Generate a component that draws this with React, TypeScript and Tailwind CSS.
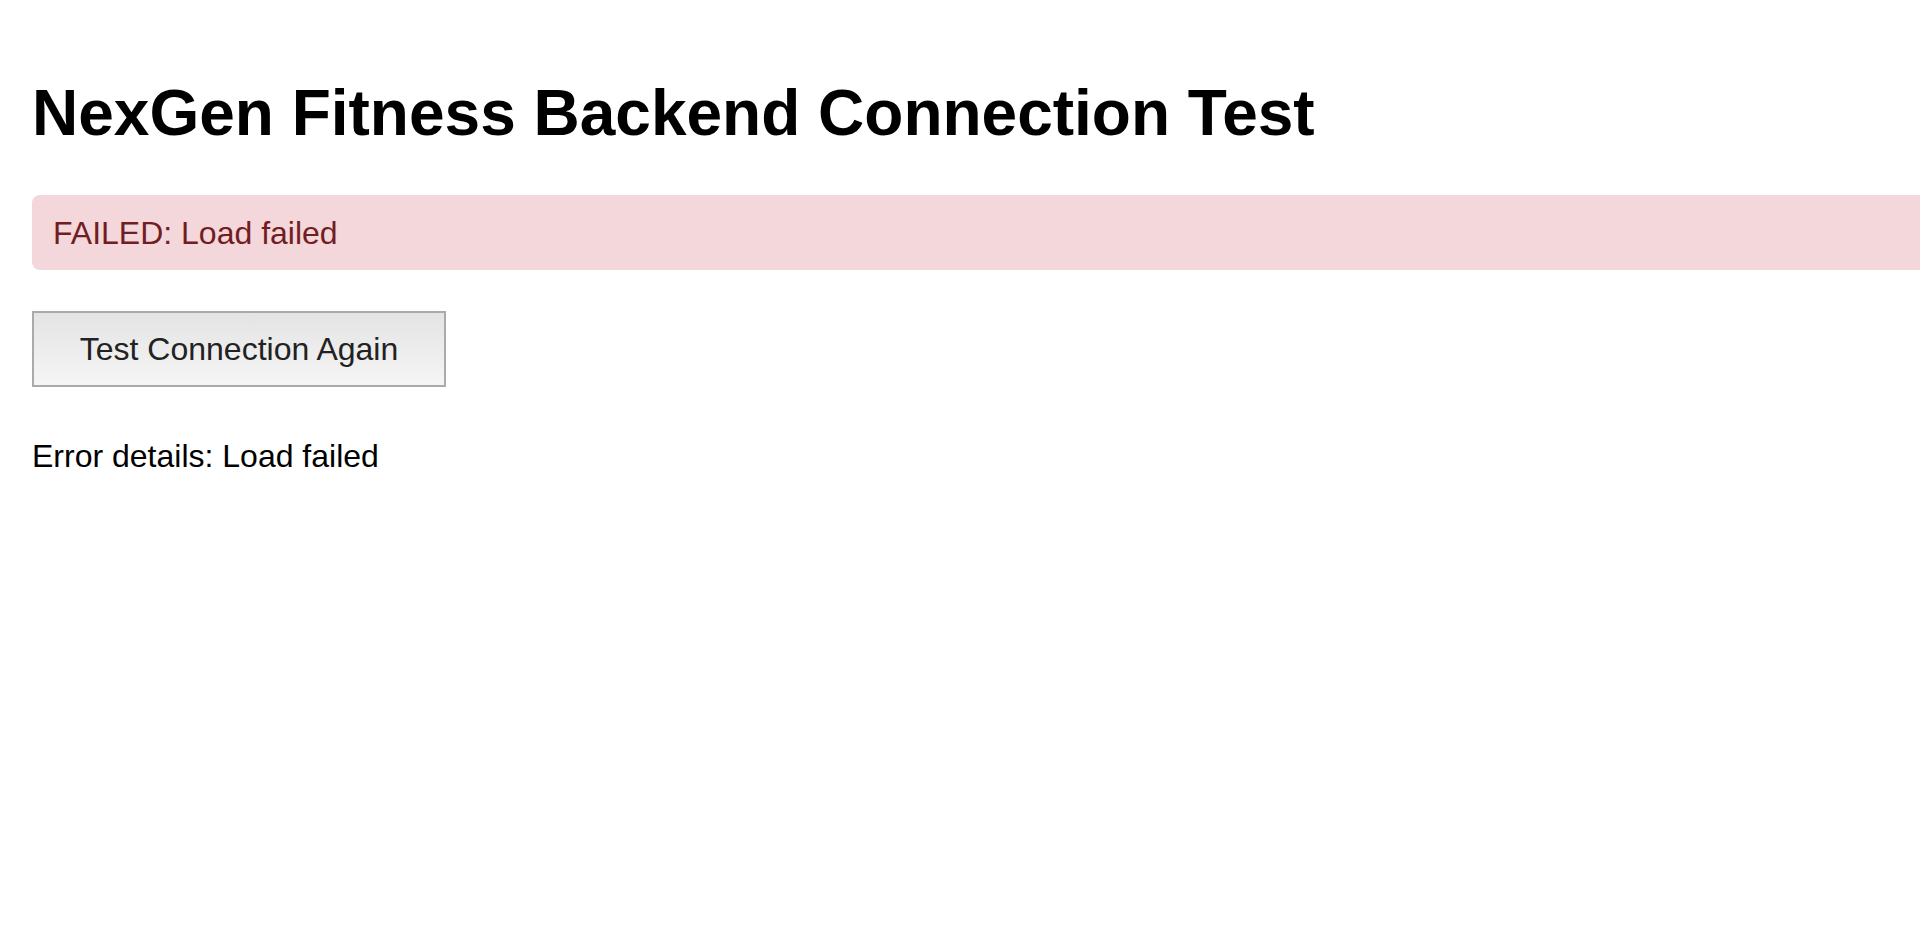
import { useState } from 'react';

export default function App() {
  const [tries, setTries] = useState(0);
  const message = 'Load failed';

  return (
    <div className="min-h-screen overflow-x-hidden bg-white px-8 pt-[76px] font-['Liberation_Sans',Arial,sans-serif] text-black">
      <h1 className="text-[64px] leading-[74px] font-bold">NexGen Fitness Backend Connection Test</h1>

      {/* status bar runs off the right edge, like the original */}
      <div className="mt-[45px] flex h-[75px] w-[calc(100%+48px)] items-center rounded-[8px] bg-[#f3d7da] px-[21px] text-[32px] text-[#721c24]">
        FAILED: {message}
      </div>

      <button
        onClick={() => setTries(tries + 1)}
        className="mt-[41px] h-[76px] w-[414px] border-2 border-[#aaaaaa] bg-gradient-to-b from-[#e4e4e4] to-[#f5f5f5] text-[32px] text-[#222222]"
      >
        Test Connection Again
      </button>

      <p className="mt-[51px] text-[32px] leading-[37px]">Error details: {message}</p>
    </div>
  );
}
